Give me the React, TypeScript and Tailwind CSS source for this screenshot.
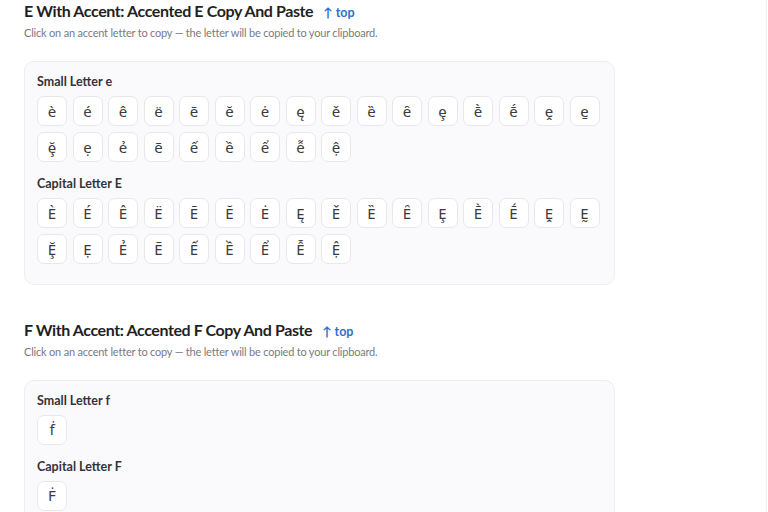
import React from 'react';

const sections = [
  {
    letter: 'E',
    groups: [
      {
        label: 'Small Letter e',
        chars: ['è', 'é', 'ê', 'ë', 'ē', 'ĕ', 'ė', 'ę', 'ě', 'ȅ', 'ȇ', 'ȩ', 'ḕ', 'ḗ', 'ḙ', 'ḛ', 'ḝ', 'ẹ', 'ẻ', 'ẽ', 'ế', 'ề', 'ể', 'ễ', 'ệ'],
      },
      {
        label: 'Capital Letter E',
        chars: ['È', 'É', 'Ê', 'Ë', 'Ē', 'Ĕ', 'Ė', 'Ę', 'Ě', 'Ȅ', 'Ȇ', 'Ȩ', 'Ḕ', 'Ḗ', 'Ḙ', 'Ḛ', 'Ḝ', 'Ẹ', 'Ẻ', 'Ẽ', 'Ế', 'Ề', 'Ể', 'Ễ', 'Ệ'],
      },
    ],
  },
  {
    letter: 'F',
    groups: [
      { label: 'Small Letter f', chars: ['ḟ'] },
      { label: 'Capital Letter F', chars: ['Ḟ'] },
    ],
  },
];

export default function App() {
  return (
    <div className="flex min-h-screen bg-white" style={{ fontFamily: 'Lato, "Noto Sans", sans-serif' }}>
      <main className="flex-1 px-6">
        {sections.map((section) => (
          <section key={section.letter} className="mb-[34px]">
            <div className="flex items-baseline gap-[10px]">
              <h2 className="text-[16px] font-bold leading-[22px] tracking-[-0.4px] text-[#1f1f24]">
                {section.letter} With Accent: Accented {section.letter} Copy And Paste
              </h2>
              <a className="text-[12.5px] font-bold text-[#2f6fd0]">↑ top</a>
            </div>
            <p className="mt-[2px] text-[11px] leading-[16px] tracking-[-0.2px] text-[#7a7a80]">
              Click on an accent letter to copy — the letter will be copied to your clipboard.
            </p>
            <div className="mt-[20px] w-[591px] rounded-[10px] border border-[#eeeef2] bg-[#fafafc] px-3 pt-[11px] pb-[20px]">
              {section.groups.map((group, gi) => (
                <div key={group.label} className={gi > 0 ? 'mt-[13px]' : ''}>
                  <div className="text-[12.5px] font-bold leading-[18px] text-[#333338]">{group.label}</div>
                  <div className="mt-[5px] flex flex-wrap gap-x-[5.5px] gap-y-[6px]" style={{ fontFamily: '"Noto Sans", "DejaVu Sans", sans-serif' }}>
                    {group.chars.map((ch, i) => (
                      <button
                        key={i}
                        className="flex h-[30px] w-[30px] items-center justify-center rounded-[7px] border border-[#e8e8ec] bg-white text-[15px] text-[#3a3a40]"
                      >
                        {ch}
                      </button>
                    ))}
                  </div>
                </div>
              ))}
            </div>
          </section>
        ))}
      </main>
      <div className="w-[2px] border-l border-[#efeff2]" />
    </div>
  );
}
